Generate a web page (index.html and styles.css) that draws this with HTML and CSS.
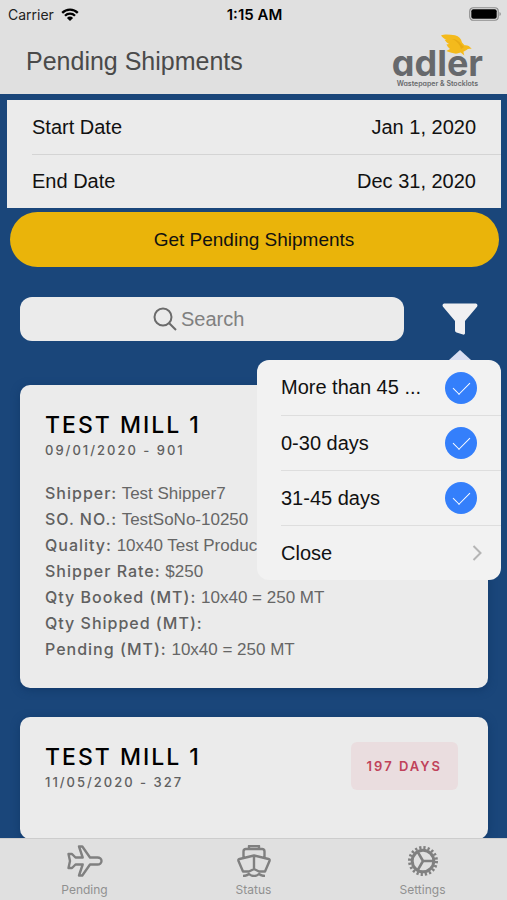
FILE: index.html
```html
<!DOCTYPE html>
<html lang="en">
<head>
<meta charset="utf-8">
<meta name="viewport" content="width=device-width, initial-scale=1">
<title>Pending Shipments</title>
<link rel="stylesheet" href="styles.css">
</head>
<body>
<div class="app">
  <header class="header">
    <div class="status-bar">
      <div class="carrier">
        <span>Carrier</span>
        <svg class="wifi" viewBox="0 0 18 13" aria-hidden="true">
          <path d="M1.2 4.9a11 11 0 0 1 15.6 0M4 7.8a7 7 0 0 1 10 0" fill="none" stroke="#000" stroke-width="2.3"/>
          <path d="M5.900 9.900a4.400 4.400 0 0 1 6.200 0L9 13z"/>
        </svg>
      </div>
      <time class="clock">1:15 AM</time>
      <svg class="battery" viewBox="0 0 32 14" aria-hidden="true">
        <rect x="0.750" y="0.750" width="28.500" height="12.500" rx="3.500" fill="none" stroke="#8c8c8c" stroke-width="1.200"/>
        <rect x="2.300" y="2.300" width="25.400" height="9.400" rx="2"/>
        <path d="M30.500 5v4q1.300-.5 1.300-2t-1.300-2z" fill="#8c8c8c"/>
      </svg>
    </div>
    <div class="title-bar">
      <h1>Pending Shipments</h1>
      <div class="logo">
        <span class="logo-name">adler</span>
        <span class="logo-tag">Wastepaper &amp; Stocklots</span>
        <svg class="eagle" viewBox="0 0 32 22" aria-hidden="true">
          <path fill="#f4ba1c" d="M1 1.500C5-.3 10 .6 15 1.300c4 .8 6 3.200 7 7.200l2.500 2.800c2.500-.4 5 .5 7.200 3.700-2.200-.6-3.700-.4-5.200.9l-3.100 1.800.9 3.800-3.600-3-3.600 1.100c-3.500.3-6.600-1-10.800-2.500L10 15c-1.500-1.200-2.700-2.700-3.600-4.500L9 10C6.800 8.600 5.500 7.300 4.600 5.800L6.500 5.700C4.200 4.700 2.300 3.400 1 1.500z"/>
          <path fill="#e8ab14" d="M12 5c4 0 7 2 9 5l3 3-3 2c-1-4-4-8-9-10z"/>
        </svg>
      </div>
    </div>
  </header>

  <main class="content">
    <form class="dates">
      <div class="date-row">
        <label for="start">Start Date</label>
        <input id="start" type="text" value="Jan 1, 2020" readonly>
      </div>
      <div class="date-row">
        <label for="end">End Date</label>
        <input id="end" type="text" value="Dec 31, 2020" readonly>
      </div>
    </form>
    <button class="fetch" type="button">Get Pending Shipments</button>

    <div class="tools">
      <label class="search">
        <svg viewBox="0 0 24 24" aria-hidden="true"><circle cx="10" cy="10" r="8.500"/><path d="M16.200 16.200 23 23"/></svg>
        <input type="text" placeholder="Search" aria-label="Search">
      </label>
      <div class="filter">
        <button class="filter-button" type="button" aria-label="Filter">
          <svg viewBox="0 0 36 32" aria-hidden="true"><path d="M2 .5h32q2.300 1 1 3.200L23 18v12.500q-.5 1.500-2 1l-6.500-2q-1.500-.5-1.500-2V18L1 3.700Q-.3 1.500 2 .5z"/></svg>
        </button>
        <div class="popover">
          <label class="option"><span>More than 45 ...</span><input type="checkbox" checked></label>
          <label class="option"><span>0-30 days</span><input type="checkbox" checked></label>
          <label class="option"><span>31-45 days</span><input type="checkbox" checked></label>
          <button class="option" type="button"><span>Close</span>
            <svg viewBox="0 0 10 16" aria-hidden="true"><path d="M1.500 1 8.500 8l-7 7"/></svg>
          </button>
        </div>
      </div>
    </div>

    <article class="card">
      <div class="card-head">
        <div>
          <h2>TEST MILL 1</h2>
          <p class="reference">09/01/2020 - 901</p>
        </div>
      </div>
      <ul class="details">
        <li><b>Shipper:</b> Test Shipper7</li>
        <li><b>SO. NO.:</b> TestSoNo-10250</li>
        <li><b>Quality:</b> 10x40 Test Product</li>
        <li><b>Shipper Rate:</b> $250</li>
        <li><b>Qty Booked (MT):</b> 10x40 = 250 MT</li>
        <li><b>Qty Shipped (MT):</b></li>
        <li><b>Pending (MT):</b> 10x40 = 250 MT</li>
      </ul>
    </article>

    <article class="card">
      <div class="card-head">
        <div>
          <h2>TEST MILL 1</h2>
          <p class="reference">11/05/2020 - 327</p>
        </div>
        <span class="days">197 DAYS</span>
      </div>
    </article>
  </main>

  <nav class="tabs">
    <a href="#pending">
      <svg viewBox="0 0 36 32" aria-hidden="true"><path d="M12 1.500h3.300l7.700 11h7.500c2.200 0 4 1.500 4 3.500s-1.800 3.500-4 3.500H23l-7.700 11H12l3.700-11H8.500L5 23H1.500L3 16 1.500 9H5l3.500 3.500h7.200z"/></svg>
      <span>Pending</span>
    </a>
    <a href="#status">
      <svg viewBox="0 0 36 32" aria-hidden="true"><path d="M13 4V1h10v3M7.500 12V6.500q0-2.500 2.500-2.500h16q2.500 0 2.500 2.500V12M18 10.500 32.500 14c1 .3 1.400.8 1 2L29 26.500H23L18 24l-5 2.500H7L2.500 16c-.4-1.200 0-1.700 1-2zM18 10.500V24M7 31q3.500 0 6-2 2 2 5 2t5-2q2.500 2 6 2"/></svg>
      <span>Status</span>
    </a>
    <a href="#settings">
      <svg viewBox="0 0 36 32" aria-hidden="true">
        <circle cx="18" cy="16" r="13.500" stroke-width="3" stroke-dasharray="2.240 2"/>
        <circle cx="18" cy="16" r="10.800" stroke-width="3"/>
        <path stroke-width="2.600" d="M18 16H28M18 16 13 7.300M18 16 13 24.700"/>
      </svg>
      <span>Settings</span>
    </a>
  </nav>
</div>
</body>
</html>
```
FILE: styles.css
```css
* { box-sizing: border-box; }

body {
  margin: 0;
  background: #1a467a;
  color: #111;
  font-family: "Liberation Sans", Arial, sans-serif;
  font-size: 20px;
}

h1, h2, p, ul { margin: 0; padding: 0; }

button, input {
  margin: 0;
  padding: 0;
  border: 0;
  background: none;
  color: inherit;
  font: inherit;
  outline: 0;
}

.app { display: flex; flex-direction: column; height: 100vh; }

.header { flex: none; background: #e0e0e0; }

.status-bar {
  display: grid;
  grid-template-columns: 1fr auto 1fr;
  align-items: center;
  height: 28px;
  padding: 0 6px 0 8px;
  font-family: Inter, sans-serif;
  font-size: 14px;
  color: #222;
}
.carrier { display: flex; align-items: center; gap: 7px; }
.wifi { width: 18px; height: 13px; }
.clock { color: #000; font-size: 15px; font-weight: 600; }
.battery { justify-self: end; width: 32px; height: 14px; }

.title-bar {
  display: flex;
  align-items: center;
  justify-content: space-between;
  height: 66px;
  padding: 0 24px 0 26px;
}
.title-bar h1 { color: #4a4a4a; font-size: 25px; font-weight: 400; }

.logo {
  position: relative;
  display: flex;
  flex-direction: column;
  align-items: center;
  padding-top: 12px;
  color: #67696c;
  font-family: Inter, sans-serif;
  font-feature-settings: "cv11";
}
.logo-name { font-size: 36px; font-weight: 700; line-height: 34px; }
.logo-tag { font-size: 7px; font-weight: 600; line-height: 8px; }
.eagle { position: absolute; top: 0; right: 11px; width: 32px; height: 22px; }

.content { flex: 1; min-height: 0; overflow: hidden; padding: 6px 6px 0 7px; }

.dates { background: #ebebeb; padding-left: 25px; }
.date-row {
  display: flex;
  align-items: center;
  justify-content: space-between;
  height: 54px;
  padding-right: 25px;
}
.date-row + .date-row { border-top: 1px solid #d4d4d4; }
.date-row input { flex: 1; min-width: 0; text-align: right; }

.fetch {
  display: block;
  width: calc(100% - 5px);
  height: 55px;
  margin: 4px auto 0;
  border-radius: 28px;
  background: #eab40a;
  font-size: 19px;
}

.tools {
  display: flex;
  align-items: center;
  gap: 38px;
  margin: 30px 23px 0 13px;
}
.search {
  flex: 1;
  display: flex;
  align-items: center;
  justify-content: center;
  gap: 4px;
  height: 44px;
  border-radius: 12px;
  background: #ebebeb;
}
.search svg { width: 24px; height: 24px; fill: none; stroke: #6b6b6b; stroke-width: 2; }
.search input { width: 90px; }
.search input::placeholder { color: #808080; opacity: 1; }

.filter { position: relative; }
.filter-button { display: block; width: 36px; height: 32px; }
.filter-button svg { display: block; fill: #f0f0f2; }

.popover {
  position: absolute;
  z-index: 1;
  top: 57px;
  right: -23px;
  width: 244px;
  padding-left: 24px;
  border-radius: 12px;
  background: #f2f2f2;
  color: #111;
}
.popover::before {
  content: "";
  position: absolute;
  top: -10px;
  right: 30px;
  border: 11px solid transparent;
  border-top: 0;
  border-bottom: 10px solid #d9def2;
}
.option {
  display: flex;
  align-items: center;
  justify-content: space-between;
  gap: 16px;
  width: 100%;
  height: 55px;
  padding-right: 24px;
  text-align: left;
}
.option + .option { border-top: 1px solid #dedede; }
.option span { white-space: nowrap; }
.option input {
  flex: none;
  width: 32px;
  height: 32px;
  border-radius: 50%;
  background: #347ffb;
  appearance: none;
}
.option input:checked::before {
  content: "";
  display: block;
  width: 8px;
  height: 15px;
  margin: 6px 0 0 12px;
  border: solid #fff;
  border-width: 0 1px 1px 0;
  transform: rotate(45deg);
}
.option svg { flex: none; width: 10px; height: 16px; margin-right: -5px; fill: none; stroke: #b5b5b5; stroke-width: 2; }

.card {
  min-height: 122px;
  margin: 44px 13px 0;
  padding: 25px;
  border-radius: 10px;
  background: #ebebeb;
  box-shadow: 0 2px 8px #123a6b;
}
.card + .card { margin-top: 29px; }
.card-head { display: flex; align-items: flex-start; justify-content: space-between; }
.card h2 {
  color: #000;
  font-family: Inter, sans-serif;
  font-size: 23px;
  line-height: 31px;
  font-weight: 500;
  letter-spacing: 2px;
}
.reference {
  color: #606060;
  font-family: Inter, sans-serif;
  font-size: 13px;
  font-weight: 500;
  line-height: 18px;
  letter-spacing: 2px;
}
.days {
  margin-right: 5px;
  padding: 0 16px;
  border-radius: 6px;
  background: #eadddf;
  color: #c0425a;
  font-family: Inter, sans-serif;
  font-size: 13px;
  font-weight: 600;
  line-height: 48px;
  letter-spacing: 2px;
}

.details {
  margin-top: 22px;
  color: #666;
  font-size: 17px;
  line-height: 26px;
  list-style: none;
}
.details b {
  color: #606060;
  font-family: Inter, sans-serif;
  font-size: 16px;
  font-weight: 500;
  line-height: 16px;
  letter-spacing: 1px;
}

.tabs {
  flex: none;
  display: flex;
  height: 62px;
  border-top: 1px solid #cdcdcd;
  background: #e0e0e0;
}
.tabs a {
  flex: 1;
  display: flex;
  flex-direction: column;
  align-items: center;
  gap: 6px;
  padding-top: 6px;
  color: #909090;
  font-family: Inter, sans-serif;
  font-size: 12px;
  line-height: 14px;
  text-decoration: none;
}
.tabs svg { width: 36px; height: 32px; fill: none; stroke: #808080; stroke-width: 2.4; stroke-linejoin: round; }
```
